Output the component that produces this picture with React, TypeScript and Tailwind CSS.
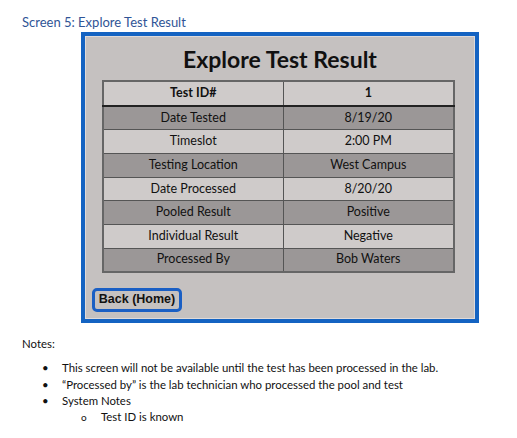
export default function App() {
  const rows = [
    ["Date Tested", "8/19/20"],
    ["Timeslot", "2:00 PM"],
    ["Testing Location", "West Campus"],
    ["Date Processed", "8/20/20"],
    ["Pooled Result", "Positive"],
    ["Individual Result", "Negative"],
    ["Processed By", "Bob Waters"],
  ];

  return (
    <div className="w-[517px] h-[438px] bg-white font-['Lato',sans-serif] overflow-hidden">
      <div className="pl-[22px] pt-[14px] text-[13px] leading-[16px] text-[#2f5496]">
        Screen 5: Explore Test Result
      </div>

      {/* Mockup frame */}
      <div className="ml-[81px] mt-[2px] w-[398px] h-[291px] border-[4px] border-[#1463c2] bg-[#c5c1c0]">
        <div className="h-full border border-[#dedada] flex flex-col">
          <h1 className="text-center font-bold text-[23px] leading-[30px] text-[#111] mt-[7px]">
            Explore Test Result
          </h1>

          <table className="ml-[16px] mt-[6px] w-[353px] border-2 border-[#666] border-collapse text-[12.5px] text-[#111] text-center">
            <tbody>
              <tr className="h-[25px] bg-[#cfcbca] font-bold border-b-2 border-[#222]">
                <td className="w-[180px] border-r border-[#555]">Test ID#</td>
                <td>1</td>
              </tr>
              {rows.map(([label, value], i) => (
                <tr
                  key={label}
                  className={`h-[23.7px] border-b border-[#555] ${i % 2 === 0 ? "bg-[#9b9797]" : "bg-[#cfcbca]"}`}
                >
                  <td className="border-r border-[#555]">{label}</td>
                  <td>{value}</td>
                </tr>
              ))}
            </tbody>
          </table>

          <button className="ml-[6px] mt-[15px] w-[90px] h-[24px] rounded-[5px] border-[3px] border-[#1a5fc4] bg-[#c5c1c0] font-['Liberation_Sans',sans-serif] font-bold text-[12.5px] text-[#111] self-start flex items-center justify-center">
            Back (Home)
          </button>
        </div>
      </div>

      {/* Notes */}
      <div className="pl-[22px] mt-[13px] text-[11.4px] leading-[16.3px] text-[#111]">
        <div>Notes:</div>
        <ul className="mt-[8px]">
          <li className="flex">
            <span className="w-[40px] pl-[20px]">•</span>
            <span>This screen will not be available until the test has been processed in the lab.</span>
          </li>
          <li className="flex">
            <span className="w-[40px] pl-[20px]">•</span>
            <span>“Processed by” is the lab technician who processed the pool and test</span>
          </li>
          <li className="flex">
            <span className="w-[40px] pl-[20px]">•</span>
            <span>System Notes</span>
          </li>
          <li className="flex">
            <span className="w-[79px] pl-[59px] text-[10px]">o</span>
            <span>Test ID is known</span>
          </li>
        </ul>
      </div>
    </div>
  );
}
